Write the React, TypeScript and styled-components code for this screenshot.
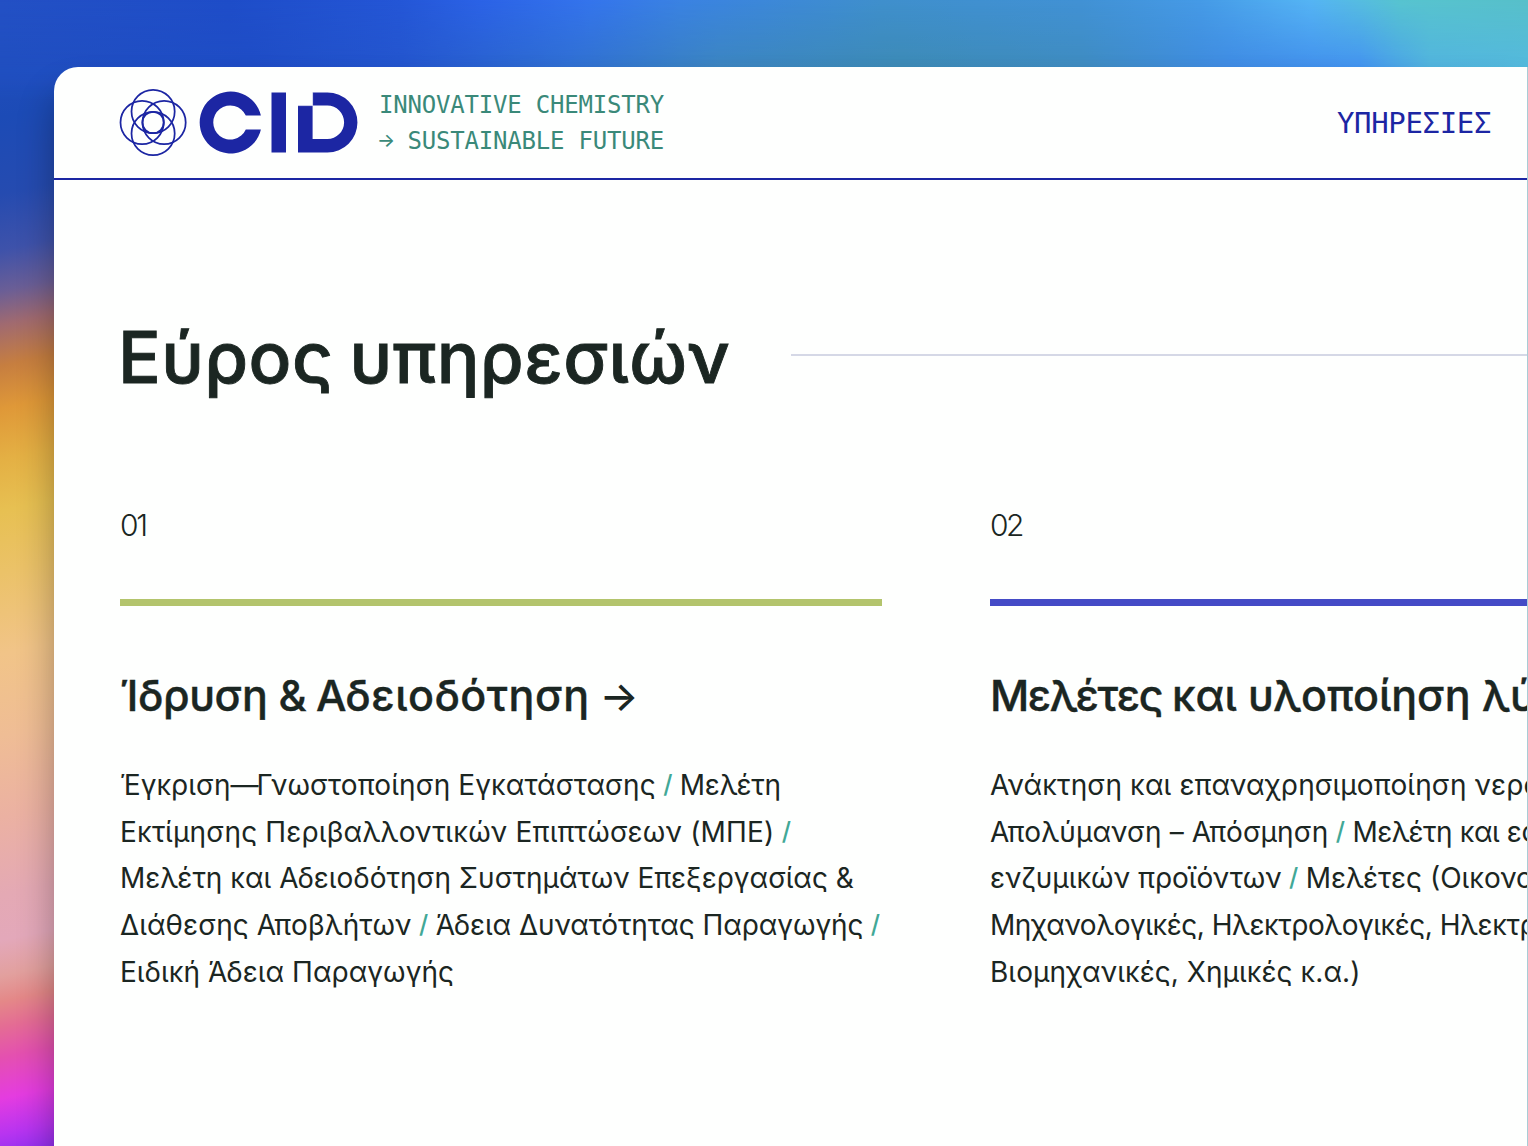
import React from "react";
import styled, { createGlobalStyle } from "styled-components";

const GlobalStyle = createGlobalStyle`
  * { box-sizing: border-box; }
  body { margin: 0; overflow: hidden; }
`;

const sans = `Inter, "Open Sans", sans-serif`;
const mono = `"DejaVu Sans Mono", "Liberation Mono", monospace`;
const ink = "#1b2622";
const navy = "#1c26a3";

const Desktop = styled.div`
  position: relative;
  isolation: isolate;
  width: 1528px;
  height: 1146px;
  padding: 67px 0 0 54px;
  overflow: hidden;
  background: linear-gradient(
    168deg,
    #2350c4 0, #1c4bb6 115px, #254bb0 190px, #3e52aa 245px, #6a5e96 285px,
    #a06a70 318px, #c67e40 358px, #df9838 400px, #e4b044 450px, #e7c052 500px,
    #ebc268 560px, #f1c488 640px, #efbd95 720px, #ebb1a2 800px, #e4a9b4 875px,
    #e3a8ba 920px, #e2a09e 955px, #e48888 980px, #e46c94 1005px, #e450b0 1035px,
    #e43ce0 1075px, #b834f0 1110px, #9030f0 1134px
  );
`;

const Glow = styled.div<{ $upper?: boolean }>`
  position: absolute;
  z-index: -1;
  top: 0;
  left: 0;
  width: 100%;
  height: 100px;
  background: ${(p) =>
    p.$upper
      ? `linear-gradient(90deg, #2350c4 0, #1e4dc8 230px, #2456d6 400px, #2b62e6 480px, #3474ec 590px,
         #3a82e2 680px, #3f8fcc 880px, #4191d4 1080px, #459ae6 1200px, #55b4f4 1310px, #57c4cf 1400px, #57bfc9 1528px)`
      : `linear-gradient(90deg, #204fc0 0, #1f4dc6 250px, #2456ce 400px, #3070d2 570px, #3c86c0 720px,
         #3d8bb6 900px, #3f8cc0 1080px, #3f8be4 1230px, #4393f2 1360px, #52b4e0 1430px, #54badf 1528px)`};
  mask-image: ${(p) =>
    p.$upper
      ? "linear-gradient(#000, transparent 70px)"
      : "linear-gradient(#000 70px, transparent)"};
`;

const Window = styled.div`
  width: 1474px;
  height: 1110px;
  overflow: hidden;
  background: #fefffe;
  border-right: 1px solid #a9cdd6;
  border-top-left-radius: 24px;
  box-shadow: 0 26px 36px rgba(0, 0, 0, 0.32);
`;

const Header = styled.header`
  display: flex;
  align-items: center;
  height: 113px;
  padding: 0 36px 0 65px;
  border-bottom: 2px solid ${navy};
`;

const Logo = styled.svg`
  display: block;
  flex: none;
  margin-right: 21px;
`;

const Tagline = styled.div`
  color: #3a8979;
  font: 24px/36px ${mono};
  letter-spacing: -0.2px;
  white-space: pre;
`;

const SmallArrow = styled.span`
  display: inline-block;
  width: 14.25px;
  font: 500 19px/20px ${sans};
  letter-spacing: 0;
  text-indent: -2px;
  vertical-align: 2px;
`;

const NavLink = styled.a`
  margin-left: auto;
  color: ${navy};
  font: 29px/36px ${mono};
  letter-spacing: -0.35px;
`;

const Main = styled.main`
  padding: 133px 0 0 66px;
  color: ${ink};
  font-family: ${sans};
`;

const TitleRow = styled.div`
  display: flex;
  align-items: center;
`;

const Title = styled.h1`
  flex: none;
  width: 670px;
  margin: 0 0 0 -2px;
  font-size: 71px;
  font-weight: 500;
  line-height: 88px;
  letter-spacing: 0.4px;
  word-spacing: -3px;
  white-space: nowrap;
  -webkit-text-stroke: 0.9px ${ink};
`;

const Rule = styled.div`
  flex: 1;
  height: 2px;
  margin: -4px 0 0 3px;
  background: #d5d8e6;
`;

const Columns = styled.div`
  display: grid;
  grid-template-columns: 762px 762px;
  column-gap: 108px;
  margin-top: 106px;
`;

const Service = styled.section`
  white-space: nowrap;
`;

const Index = styled.div<{ $tracking: number }>`
  font-size: 30px;
  font-weight: 300;
  line-height: 36px;
  letter-spacing: ${(p) => p.$tracking}px;
`;

const Bar = styled.div<{ $color: string }>`
  height: 7px;
  margin: 56px 0 61px;
  background: ${(p) => p.$color};
`;

const Name = styled.h2`
  margin: 0;
  font-size: 43px;
  font-weight: 500;
  line-height: 56px;
  -webkit-text-stroke: 0.4px ${ink};
`;

const Arrow = styled.span`
  margin-left: 10px;
  font-size: 41px;
  line-height: 1;
  -webkit-text-stroke: 0;
`;

const Details = styled.div`
  margin-top: 38.8px;
  font-size: 28px;
  line-height: 46.8px;
`;

const Run = styled.span<{ $tracking?: number }>`
  letter-spacing: ${(p) => p.$tracking ?? 0}px;
  white-space: pre;
`;

const Slash = styled.span`
  display: inline-block;
  width: 24px;
  color: #41a896;
  font-size: 25px;
  font-weight: 500;
  line-height: 1;
  text-align: center;
  vertical-align: 2px;
`;

type Part = [text: string, tracking?: number];

interface ServiceData {
  index: string;
  indexTracking: number;
  color: string;
  name: Part[];
  arrow?: boolean;
  lines: Part[][];
}

const slash: Part = ["/"];

const services: ServiceData[] = [
  {
    index: "01",
    indexTracking: -2.2,
    color: "#b3c46c",
    name: [["Ίδρυση ", -0.4], ["& ", -1], ["Αδειοδότηση", 0.5]],
    arrow: true,
    lines: [
      [["Έγκριση"], ["—", -2], ["Γνωστοποίηση Εγκατάστασης", 0.08], slash, ["Μελέτη", -0.2]],
      [["Εκτίμησης Περιβαλλοντικών Επιπτώσεων (ΜΠΕ)", 0.18], slash],
      [["Μελέτη και Αδειοδότηση Συστημάτων Επεξεργασίας &"]],
      [["Διάθεσης Αποβλήτων", 0.08], slash, ["Άδεια Δυνατότητας Παραγωγής", -0.08], slash],
      [["Ειδική Άδεια Παραγωγής", 0.04]],
    ],
  },
  {
    index: "02",
    indexTracking: -2.6,
    color: "#444bc6",
    name: [["Μελέτες ", -1.4], ["και υλοποίηση λύσεων", -0.05]],
    lines: [
      [["Ανάκτηση και επαναχρησιμοποίηση νερού", 0.12]],
      [["Απολύμανση – Απόσμηση", 0.1], slash, ["Μελέτη και εφαρμογή", -0.43]],
      [["ενζυμικών προϊόντων"], slash, ["Μελέτες (Οικονομικές,", 0]],
      [["Μηχανολογικές, Ηλεκτρολογικές, Ηλεκτρονικές,", -0.48]],
      [["Βιομηχανικές, Χημικές κ.α.)", 0.05]],
    ],
  },
];

function Parts({ parts }: { parts: Part[] }) {
  return (
    <>
      {parts.map((part, i) =>
        part === slash ? (
          <Slash key={i}>/</Slash>
        ) : (
          <Run key={i} $tracking={part[1]}>
            {part[0]}
          </Run>
        )
      )}
    </>
  );
}

function CidLogo() {
  return (
    <Logo width="239" height="68" viewBox="119 89 239 68" aria-label="CID">
      <g fill="none" stroke={navy} strokeWidth="1.75">
        <circle cx="153.1" cy="111.5" r="21.6" />
        <circle cx="153.1" cy="133.5" r="21.6" />
        <circle cx="142.1" cy="122.5" r="21.6" />
        <circle cx="164.1" cy="122.5" r="21.6" />
        <circle cx="153.1" cy="122.5" r="10.7" />
      </g>
      <g fill={navy}>
        <path d="M260.9 115.6A31 31 0 1 0 260.9 129.4H245.8A17 17 0 1 1 245.8 115.6Z" />
        <path d="M271.5 92.4H286V152.5H271.5Z" />
        <path d="M312.6 92.4H327.4A30.05 30.05 0 0 1 327.4 152.5H298V105.6H312.6V139H327.4A16.7 16.7 0 0 0 327.4 105.6H312.6Z" />
      </g>
      <path d="M312.6 92.4V105.6H298" fill="none" stroke="#fefffe" strokeWidth="0.6" />
    </Logo>
  );
}

export default function App() {
  return (
    <Desktop>
      <GlobalStyle />
      <Glow />
      <Glow $upper />
      <Window>
        <Header>
          <CidLogo />
          <Tagline>
            <div>INNOVATIVE CHEMISTRY</div>
            <div>
              <SmallArrow>→</SmallArrow> SUSTAINABLE FUTURE
            </div>
          </Tagline>
          <NavLink>ΥΠΗΡΕΣΙΕΣ</NavLink>
        </Header>
        <Main>
          <TitleRow>
            <Title>Εύρος υπηρεσιών</Title>
            <Rule />
          </TitleRow>
          <Columns>
            {services.map((s) => (
              <Service key={s.index}>
                <Index $tracking={s.indexTracking}>{s.index}</Index>
                <Bar $color={s.color} />
                <Name>
                  <Parts parts={s.name} />
                  {s.arrow && <Arrow>→</Arrow>}
                </Name>
                <Details>
                  {s.lines.map((line, i) => (
                    <div key={i}>
                      <Parts parts={line} />
                    </div>
                  ))}
                </Details>
              </Service>
            ))}
          </Columns>
        </Main>
      </Window>
    </Desktop>
  );
}
